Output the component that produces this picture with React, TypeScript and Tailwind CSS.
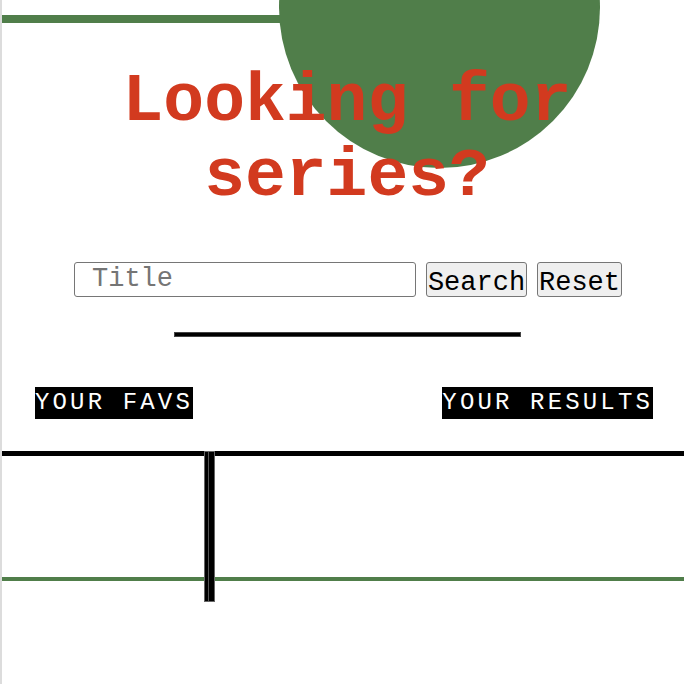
import {useState} from "react";

const mono = "font-['Liberation_Mono','Courier_New',monospace]";

const Label = ({text}: { text: string }) => (
    <span className={`${mono} bg-black text-white text-[24px] leading-[32px] tracking-[3.15px] block`}>{text}</span>
)

const App = () => {
    const [title, setTitle] = useState("");

    return (
        <div className="relative h-[684px] overflow-hidden bg-white border-l-2 border-[#dcdcdc]">
            {/* decorative background */}
            <div className="absolute left-0 top-[15px] w-[320px] h-[8px] bg-[#507e4a] blur-[0.4px]"></div>
            <div className="absolute left-[277px] top-[-153px] w-[321px] h-[321px] rounded-full bg-[#507e4a] blur-[0.6px]"></div>
            <div className="absolute left-0 right-0 top-[577px] h-[4px] bg-[#507e4a] blur-[0.6px]"></div>

            <h1 className={`${mono} relative mt-[64px] pl-[8px] text-center text-[68px] leading-[75px] font-bold text-[#d23a1f]`}>
                Looking for series?
            </h1>

            <form className="relative mt-[48px] flex gap-[10px] pl-[72px]" onSubmit={(e) => e.preventDefault()}>
                <input
                    value={title}
                    onChange={(e) => setTitle(e.target.value)}
                    placeholder="Title"
                    className={`${mono} w-[342px] h-[35px] border border-[#767676] rounded-[3px] pl-[17px] text-[27px] placeholder:text-[#757575]`}
                />
                <button type="submit"
                        className={`${mono} h-[35px] w-[101px] border border-[#767676] rounded-[3px] bg-[#efefef] text-[27px] text-black`}>
                    Search
                </button>
                <button type="button" onClick={() => setTitle("")}
                        className={`${mono} h-[35px] w-[85px] border border-[#767676] rounded-[3px] bg-[#efefef] text-[27px] text-black`}>
                    Reset
                </button>
            </form>

            <div className="relative mt-[35px] ml-[172px] w-[347px] h-[5px] bg-black border border-[#444]"></div>

            <div className="relative mt-[50px] flex justify-between pl-[33px] pr-[31px]">
                <Label text="YOUR FAVS"/>
                <Label text="YOUR RESULTS"/>
            </div>

            <div className="relative mt-[32px] h-[5px] bg-black"></div>
            <div className="relative flex">
                <div className="w-[202px]"></div>
                <div className="flex -mt-[5px] h-[151px] border border-[#666]">
                    <div className="w-[4px] bg-black border-r border-[#555]"></div>
                    <div className="w-[5px] bg-black"></div>
                </div>
            </div>
        </div>
    )
}

export default App;
